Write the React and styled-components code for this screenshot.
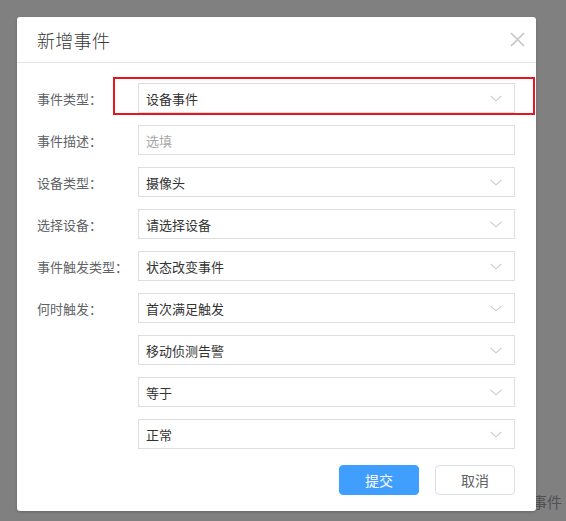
import React from "react";
import styled, { createGlobalStyle } from "styled-components";

const GlobalStyle = createGlobalStyle`
  html, body {
    margin: 0;
    padding: 0;
    background: #808080;
    font-family: "Noto Sans CJK SC", "Liberation Sans", sans-serif;
  }
  * {
    box-sizing: border-box;
  }
`;

const Page = styled.div`
  position: relative;
  width: 566px;
  height: 521px;
  padding: 17px 0 0 17px;
  overflow: hidden;
`;

// page content sitting under the mask
const PageText = styled.div`
  position: absolute;
  right: 4px;
  bottom: 9px;
  font-size: 15px;
  color: #505050;
  z-index: 0;
`;

const Dialog = styled.div`
  position: relative;
  z-index: 1;
  width: 519px;
  height: 494px;
  background: #fff;
  border-radius: 3px;
  box-shadow: 0 1px 3px rgba(0, 0, 0, 0.2);
  display: flex;
  flex-direction: column;
`;

const Header = styled.div`
  height: 46px;
  border-bottom: 1px solid #e4e4ea;
  display: flex;
  align-items: center;
  justify-content: space-between;
  padding: 0 11px 0 20px;
`;

const Title = styled.div`
  font-size: 18px;
  font-weight: 300;
  color: #3a3a3a;
  letter-spacing: 0.3px;
`;

const CloseButton = styled.button`
  width: 16px;
  height: 16px;
  padding: 0;
  border: none;
  background: none;
  display: flex;
  align-items: center;
  justify-content: center;
  cursor: pointer;
`;

const Body = styled.div`
  padding: 20px 21px 16px 20px;
  display: flex;
  flex-direction: column;
  gap: 12px;
`;

const Row = styled.div`
  position: relative;
  display: flex;
  align-items: center;
  height: 30px;
`;

const Label = styled.div`
  width: 101px;
  font-size: 13px;
  color: #606266;
`;

const Field = styled.div`
  width: 377px;
  height: 30px;
  border: 1px solid #dddde6;
  display: flex;
  align-items: center;
  justify-content: space-between;
  padding: 0 12px 0 7px;
  font-size: 13px;
  color: ${(p) => (p.placeholder ? "#a8a8a8" : "#333")};
  margin-left: ${(p) => (p.indent ? "101px" : "0")};
`;

const Highlight = styled.div`
  position: absolute;
  left: 76px;
  top: -6px;
  width: 422px;
  height: 38px;
  border: 2px solid #e8141e;
  pointer-events: none;
`;

const Footer = styled.div`
  display: flex;
  justify-content: flex-end;
  gap: 16px;
  margin-top: 4px;
`;

const Button = styled.button`
  width: 80px;
  height: 30px;
  border-radius: 4px;
  font-family: inherit;
  font-size: 14px;
  cursor: pointer;
  border: 1px solid ${(p) => (p.primary ? "#409eff" : "#dcdfe6")};
  background: ${(p) => (p.primary ? "#409eff" : "#fff")};
  color: ${(p) => (p.primary ? "#fff" : "#606266")};
`;

const Chevron = () => (
  <svg width="12" height="7" viewBox="0 0 12 7">
    <path d="M0.5 0.8 L6 5.8 L11.5 0.8" fill="none" stroke="#c9c9d2" strokeWidth="1.1" />
  </svg>
);

const CloseIcon = () => (
  <svg width="15" height="15" viewBox="0 0 15 15">
    <path d="M1 1 L14 14 M14 1 L1 14" stroke="#c4c4c4" strokeWidth="1.6" />
  </svg>
);

const rows = [
  { label: "事件类型：", value: "设备事件", select: true, marked: true },
  { label: "事件描述：", value: "选填", placeholder: true },
  { label: "设备类型：", value: "摄像头", select: true },
  { label: "选择设备：", value: "请选择设备", select: true },
  { label: "事件触发类型：", value: "状态改变事件", select: true },
  { label: "何时触发：", value: "首次满足触发", select: true },
  { value: "移动侦测告警", select: true },
  { value: "等于", select: true },
  { value: "正常", select: true },
];

export default function App() {
  return (
    <>
      <GlobalStyle />
      <Page>
        <PageText>新增事件</PageText>
        <Dialog>
          <Header>
            <Title>新增事件</Title>
            <CloseButton>
              <CloseIcon />
            </CloseButton>
          </Header>
          <Body>
            {rows.map((r, i) => (
              <Row key={i}>
                {r.label && <Label>{r.label}</Label>}
                <Field placeholder={r.placeholder} indent={!r.label}>
                  <span>{r.value}</span>
                  {r.select && <Chevron />}
                </Field>
                {r.marked && <Highlight />}
              </Row>
            ))}
            <Footer>
              <Button primary>提交</Button>
              <Button>取消</Button>
            </Footer>
          </Body>
        </Dialog>
      </Page>
    </>
  );
}
